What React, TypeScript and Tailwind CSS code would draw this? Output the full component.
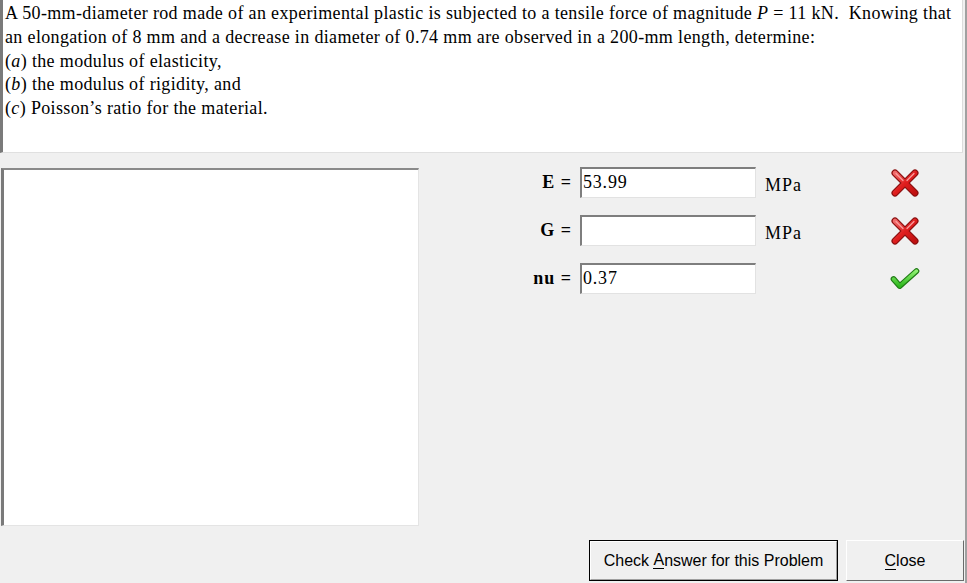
import React from "react";

const XIcon = () => (
  <svg width="30" height="30" viewBox="0 0 30 30">
    <defs>
      <linearGradient id="xr" x1="0" y1="0" x2="1" y2="1">
        <stop offset="0" stopColor="#f06a6a" />
        <stop offset="0.5" stopColor="#e01e1e" />
        <stop offset="1" stopColor="#c01010" />
      </linearGradient>
    </defs>
    <g strokeLinecap="round">
      <line x1="5" y1="5" x2="25" y2="25" stroke="#8a0e0e" strokeWidth="7" />
      <line x1="25" y1="5" x2="5" y2="25" stroke="#8a0e0e" strokeWidth="7" />
      <line x1="5" y1="5" x2="25" y2="25" stroke="url(#xr)" strokeWidth="4.6" />
      <line x1="25" y1="5" x2="5" y2="25" stroke="url(#xr)" strokeWidth="4.6" />
      <line x1="6" y1="5.5" x2="13" y2="12.5" stroke="#f8a0a0" strokeWidth="1.2" />
      <line x1="24" y1="5.5" x2="17" y2="12.5" stroke="#f8a0a0" strokeWidth="1.2" />
    </g>
  </svg>
);

const CheckIcon = () => (
  <svg width="34" height="26" viewBox="0 0 34 26">
    <defs>
      <linearGradient id="cg" x1="0" y1="0" x2="0" y2="1">
        <stop offset="0" stopColor="#8ef070" />
        <stop offset="1" stopColor="#2eb81e" />
      </linearGradient>
    </defs>
    <g strokeLinecap="round" strokeLinejoin="round" fill="none">
      <polyline points="4,13 11,21 30,4" stroke="#1f7a14" strokeWidth="6.5" />
      <polyline points="4,13 11,21 30,4" stroke="url(#cg)" strokeWidth="4" />
    </g>
  </svg>
);

const rows = [
  { label: "E =", value: "53.99", unit: "MPa", ok: false },
  { label: "G =", value: "", unit: "MPa", ok: false },
  { label: "nu =", value: "0.37", unit: "", ok: true },
];

export default function App() {
  return (
    <div
      className="w-[967px] h-[583px] bg-[#f0f0f0] flex flex-col overflow-hidden text-black border-r-2 border-r-[#a0a0a0]"
      style={{ fontFamily: '"Liberation Serif", "Times New Roman", serif' }}
    >
      <div className="w-[963px] h-[153px] shrink-0 bg-white border-l-[3px] border-l-[#7a7a7a] border-b border-b-[#e0e0e0] border-r border-r-[#dcdcdc] pl-[2px] pt-[2px] text-[18px] leading-[23.8px] tracking-[0.35px]">
        <div>
          A 50-mm-diameter rod made of an experimental plastic is subjected to a tensile force of magnitude <i>P</i> = 11 kN.{"\u00a0 "}Knowing that
        </div>
        <div>an elongation of 8 mm and a decrease in diameter of 0.74 mm are observed in a 200-mm length, determine:</div>
        <div>(<i>a</i>) the modulus of elasticity,</div>
        <div>(<i>b</i>) the modulus of rigidity, and</div>
        <div>(<i>c</i>) Poisson’s ratio for the material.</div>
      </div>

      <div className="flex mt-[15px] h-[358px] shrink-0">
        <div className="ml-[1px] w-[418px] h-[358px] bg-white border-t-2 border-l-[3px] border-t-[#8a8a8a] border-l-[#7a7a7a] border-r border-b border-r-[#e4e4e4] border-b-[#e4e4e4]" />
        <div className="flex flex-col gap-[17px] -mt-[1px]">
          {rows.map((r) => (
            <div key={r.label} className="flex items-center h-[31px]">
              <div className="w-[161px] text-right font-bold text-[18px] tracking-[1px] pr-[8px]">{r.label}</div>
              <div className="w-[176px] h-[31px] bg-white border-t-2 border-l-2 border-t-[#7e7e7e] border-l-[#7e7e7e] border-r border-b border-r-[#e2e2e2] border-b-[#e2e2e2] text-[18px] tracking-[0.8px] leading-[26px] pl-[1px]">
                {r.value}
              </div>
              <div className="w-[134px] pl-[9px] text-[18px] tracking-[1px] pt-[6px]">{r.unit}</div>
              <div className="w-[30px] flex justify-center">{r.ok ? <CheckIcon /> : <XIcon />}</div>
            </div>
          ))}
        </div>
      </div>

      <div
        className="flex justify-end gap-[8px] mt-[14px] pr-[1px] text-[16px]"
        style={{ fontFamily: '"Liberation Sans", Arial, sans-serif' }}
      >
        <button className="w-[249px] h-[41px] border border-black bg-[#f0f0f0] flex items-center justify-center">
          <span className="w-full h-full flex items-center justify-center border border-t-white border-l-white border-r-[#a0a0a0] border-b-[#a0a0a0]">
            Check&nbsp;<u className="no-underline border-b border-black leading-[16px]">A</u>nswer for this Problem
          </span>
        </button>
        <button className="w-[118px] h-[41px] bg-[#f0f0f0] border border-t-white border-l-white border-r-[#6a6a6a] border-b-[#6a6a6a] flex items-center justify-center">
          <span>
            <u className="no-underline border-b border-black leading-[16px]">C</u>lose
          </span>
        </button>
      </div>
    </div>
  );
}
